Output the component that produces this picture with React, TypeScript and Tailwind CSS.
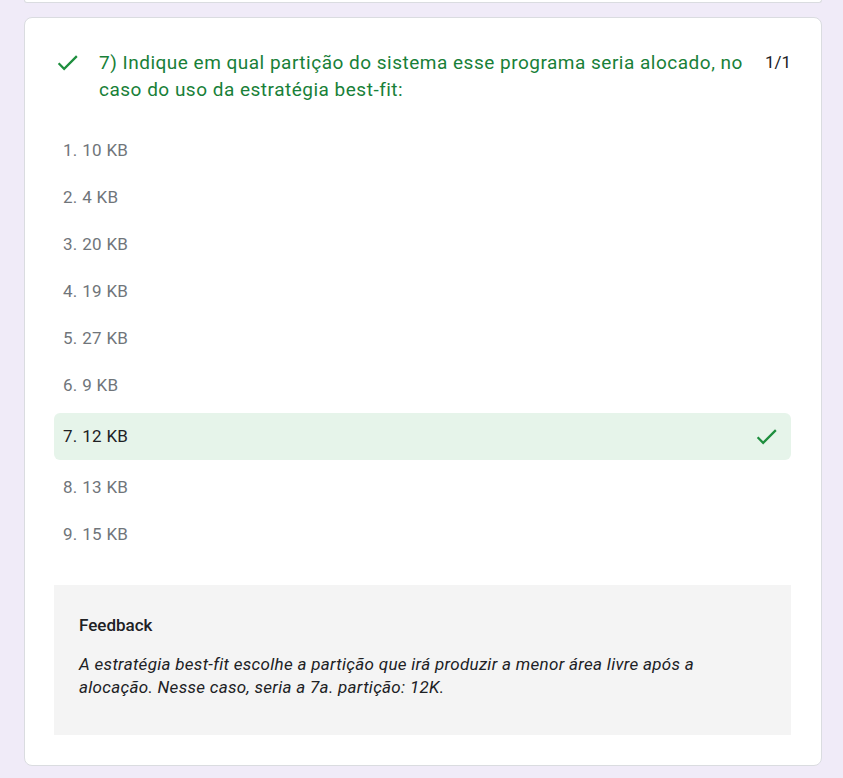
const options = ["10 KB", "4 KB", "20 KB", "19 KB", "27 KB", "9 KB", "12 KB", "13 KB", "15 KB"];
const correctIndex = 6;

function CheckIcon({ className }: { className?: string }) {
  return (
    <svg viewBox="0 0 24 24" className={className} fill="currentColor" aria-hidden="true">
      <path d="M9 16.17L4.83 12l-1.42 1.41L9 19 21 7l-1.41-1.41z" />
    </svg>
  );
}

export default function App() {
  return (
    <div className="min-h-[778px] bg-[#f0ebf8] pb-3 pl-6 pr-[21px] font-['Roboto',sans-serif]">
      <div className="h-[3px] rounded-b-lg border-x border-b border-[#dadce0] bg-white" />

      <div className="mt-[14px] rounded-lg border border-[#dadce0] bg-white pb-[30px] pl-[29px] pr-[30px] pt-[31px]">
        <div className="flex items-start">
          <CheckIcon className="h-[27px] w-[27px] shrink-0 text-[#1e8e3e]" />
          <div className="ml-[18px] flex-1 text-[19px] leading-[27px] tracking-[0.5px] text-[#188038]">
            7) Indique em qual partição do sistema esse programa seria alocado, no caso do uso da estratégia best-fit:
          </div>
          <div className="pl-[12px] text-[17px] leading-[27px] text-[#202124]">1/1</div>
        </div>

        <div className="mt-[24px] flex flex-col">
          {options.map((opt, i) =>
            i === correctIndex ? (
              <div
                key={opt}
                className="my-[4px] flex h-[47px] items-center justify-between rounded-md bg-[#e6f4ea] pl-[9px] pr-[11px] text-[17px] tracking-[0.3px] text-[#202124]"
              >
                <span>
                  {i + 1}. {opt}
                </span>
                <CheckIcon className="h-[27px] w-[27px] text-[#1e8e3e]" />
              </div>
            ) : (
              <div
                key={opt}
                className="flex h-[47px] items-center pl-[9px] text-[17px] tracking-[0.3px] text-[#70757a]"
              >
                {i + 1}. {opt}
              </div>
            )
          )}
        </div>

        <div className="mt-[27px] bg-[#f4f4f4] px-[25px] pb-[36px] pt-[28px]">
          <div className="text-[17px] font-medium leading-[24px] text-[#202124]">Feedback</div>
          <p className="mt-[16px] text-[17px] italic leading-[23px] tracking-[0.3px] text-[#202124]">
            A estratégia best-fit escolhe a partição que irá produzir a menor área livre após a alocação. Nesse caso, seria a 7a. partição: 12K.
          </p>
        </div>
      </div>
    </div>
  );
}
